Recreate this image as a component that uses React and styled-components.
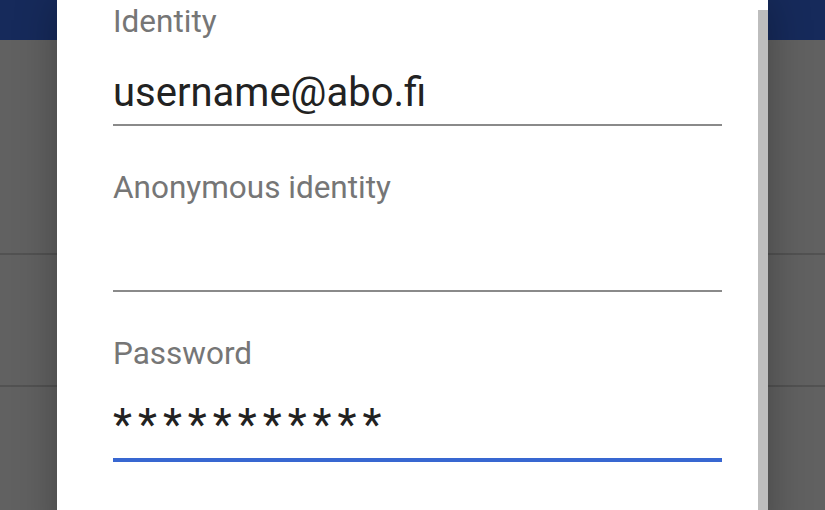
import React from 'react';
import styled, { createGlobalStyle } from 'styled-components';

const fields = [
    { label: "Identity", value: "username@abo.fi" },
    { label: "Anonymous identity", value: "" },
    { label: "Password", value: "***********", secret: true, focused: true },
];

function App() {
    return (
        <Screen>
            <GlobalStyle />
            <Page>
                <AppBar />
                <ListArea>
                    <Row />
                    <Row />
                    <Row />
                </ListArea>
            </Page>
            <Dialog>
                <Form>
                    {fields.map((f) => (
                        <Field key={f.label}>
                            <Label>{f.label}</Label>
                            <Value secret={f.secret} focused={f.focused}>{f.value || '\u00a0'}</Value>
                        </Field>
                    ))}
                </Form>
                <ScrollThumb />
            </Dialog>
        </Screen>
    )
};

const GlobalStyle = createGlobalStyle`
    html, body {
        margin: 0;
        padding: 0;
        background: #616161;
    }
    * {
        box-sizing: border-box;
    }
`;
const Screen = styled.div`
    position: relative;
    width: 825px;
    height: 510px;
    overflow: hidden;
    background: #616161;
    font-family: Roboto, "Noto Sans", sans-serif;
`;
const Page = styled.div`
    display: flex;
    flex-direction: column;
`;
const AppBar = styled.div`
    flex-shrink: 0;
    height: 40px;
    background-color: #162a5b;
`;
const ListArea = styled.div`
    display: flex;
    flex-direction: column;
    padding-top: 83px;
`;
const Row = styled.div`
    flex-shrink: 0;
    height: 132px;
    border-bottom: 2px solid #525252;
`;
const Dialog = styled.div`
    position: absolute;
    left: 57px;
    top: 0;
    width: 711px;
    bottom: -40px;
    background: #ffffff;
    box-shadow: 0 0 40px rgba(0, 0, 0, 0.3);
`;
const Form = styled.div`
    display: flex;
    flex-direction: column;
    padding: 2px 46px 0 56px;
`;
const Field = styled.div`
    display: flex;
    flex-direction: column;
    margin-bottom: 42px;
`;
const Label = styled.div`
    font-size: 31.5px;
    line-height: 40px;
    color: #767676;
    margin-bottom: 26px;
`;
const Value = styled.div`
    font-size: ${p => p.secret ? '44px' : '40px'};
    line-height: 50px;
    letter-spacing: ${p => p.secret ? '6px' : '0'};
    color: #222222;
    padding-bottom: ${p => p.focused ? '8px' : '6px'};
    border-bottom: ${p => p.focused ? '4px solid #3867d1' : '2px solid #8a8a8a'};
    white-space: pre;
`;
const ScrollThumb = styled.div`
    position: absolute;
    right: 0;
    top: 10px;
    bottom: 0;
    width: 10px;
    background: #bdbdbd;
`;

export default App;
